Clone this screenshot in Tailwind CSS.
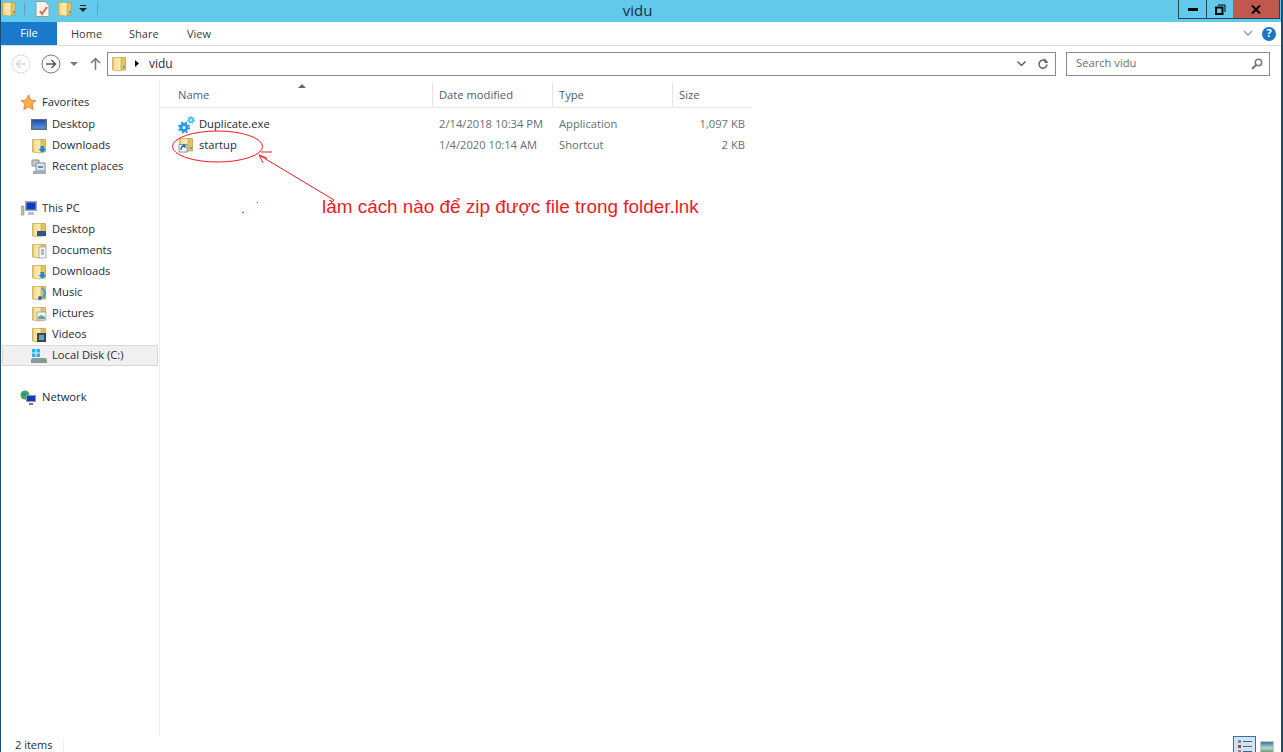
<!doctype html>
<html lang="en">
<head>
<meta charset="UTF-8" />
<title>vidu</title>
<script src="https://cdn.jsdelivr.net/npm/@tailwindcss/browser@4"></script>
</head>
<body>
<svg width="0" height="0" class="absolute">
  <defs>
    <linearGradient id="folderFront" x1="0" y1="0" x2="1" y2="0">
      <stop offset="0" stop-color="#d9b45c"/>
      <stop offset=".25" stop-color="#f6e19a"/>
      <stop offset="1" stop-color="#fbeebb"/>
    </linearGradient>
    <linearGradient id="screen" x1="0" y1="0" x2="0" y2="1">
      <stop offset="0" stop-color="#1d4fa8"/>
      <stop offset="1" stop-color="#5b93dc"/>
    </linearGradient>
    <symbol id="folder" viewBox="0 0 16 16">
      <path d="M8 1.500h6.500v12.500H8z" fill="#e3c25f" stroke="#b9993f" stroke-width=".7"/>
      <path d="M12 10h2v2h-2z" fill="#4aa3dc"/>
      <path d="M1.500 1.500h7.800l.7 1v11.800l-1 .7-7.500-1z" fill="url(#folderFront)" stroke="#c6a750" stroke-width=".7"/>
    </symbol>
  </defs>
</svg>
<div class="relative flex h-[752px] w-[1283px] flex-col overflow-hidden border-l border-r-2 border-l-[#1b4f72] border-r-[#1b4f72] bg-white font-['Open_Sans','Noto_Sans',sans-serif] text-[11.2px] text-[#1e2b3a]">

  <!-- title bar -->
  <div class="relative flex h-[22px] shrink-0 items-center justify-center bg-[#62c9ea] pb-[2px] pr-[7px] text-[15px] text-[#12323f]">
    <div class="absolute left-0 top-[1px] flex items-center">
      <svg class="h-[16px] w-[16px]"><use href="#folder"/></svg>
      <span class="ml-[7px] h-[12px] w-px bg-[#6f98a8]"></span>
      <svg class="ml-[10px] h-[16px] w-[15px]" viewBox="0 0 15 16"><path d="M1 .500h9l4 4v11H1z" fill="#f7f5f2" stroke="#9a9a9a"/><path d="M5 10l2 3 5-7" fill="none" stroke="#ea6a3c" stroke-width="2"/></svg>
      <svg class="ml-[7px] h-[16px] w-[16px]"><use href="#folder"/></svg>
      <svg class="ml-[6px] h-[8px] w-[8px]" viewBox="0 0 8 8"><path d="M1 0h6v1H1z" fill="#222"/><path d="M0 3h8L4 7z" fill="#222"/></svg>
      <span class="ml-[10px] h-[12px] w-px bg-[#6f98a8]"></span>
    </div>
    <span>vidu</span>
    <div class="absolute right-[1px] top-0 flex h-[19px] border-x border-b border-[#27444f]">
      <div class="flex w-[28px] items-center justify-center border-r border-[#27444f]"><span class="h-[3px] w-[10px] bg-black"></span></div>
      <div class="flex w-[26px] items-center justify-center">
        <svg class="h-[11px] w-[11px]" viewBox="0 0 11 11"><path d="M3 1h7v7" fill="none" stroke="#000"/><path d="M1 3.500h6.500V10H1z" fill="none" stroke="#000" stroke-width="2"/></svg>
      </div>
      <div class="flex w-[46px] items-center justify-center bg-[#c1584e]">
        <svg class="h-[9px] w-[10px]" viewBox="0 0 10 9"><path d="M1 .5l8 8M9 .5l-8 8" stroke="#000" stroke-width="2"/></svg>
      </div>
    </div>
  </div>

  <!-- ribbon tabs -->
  <div class="flex h-[24px] shrink-0 items-center border-b border-[#dadbdc] text-[11px] text-[#3b3b3b]">
    <div class="flex h-full w-[56px] items-center justify-center bg-[#1979ca] text-white">File</div>
    <div class="ml-[14px] flex h-full w-[58px] items-center pt-[1px]">Home</div>
    <div class="flex h-full w-[58px] items-center pt-[1px]">Share</div>
    <div class="flex h-full items-center pt-[1px]">View</div>
    <svg class="ml-auto mr-[9px] h-[7px] w-[10px]" viewBox="0 0 10 7"><path d="M1 1l4 4 4-4" fill="none" stroke="#9a9a9a" stroke-width="1.500"/></svg>
    <div class="mr-[5px] flex h-[14px] w-[14px] items-center justify-center rounded-full bg-[#1b75c4] text-[11px] font-bold text-white">?</div>
  </div>

  <!-- address bar -->
  <div class="flex h-[34px] shrink-0 items-center pt-[1px]">
    <svg class="ml-[10px] h-[20px] w-[20px]" viewBox="0 0 20 20"><circle cx="10" cy="10" r="9" fill="none" stroke="#dcdcdc"/><path d="M15 10H6M9.500 6L5.500 10l4 4" fill="none" stroke="#dcdcdc" stroke-width="1.500"/></svg>
    <svg class="ml-[10px] h-[20px] w-[20px]" viewBox="0 0 20 20"><circle cx="10" cy="10" r="9" fill="none" stroke="#777"/><path d="M5 10h9M10.500 6l4 4-4 4" fill="none" stroke="#555" stroke-width="1.500"/></svg>
    <svg class="ml-[9px] h-[4px] w-[8px]" viewBox="0 0 8 4"><path d="M0 0h8L4 4z" fill="#7c7c7c"/></svg>
    <svg class="ml-[12px] h-[13px] w-[11px]" viewBox="0 0 11 13"><path d="M5.500 13V2M1 6l4.500-4.500L10 6" fill="none" stroke="#777" stroke-width="1.500"/></svg>
    <div class="ml-[6px] flex h-[24px] w-[949px] items-center border border-[#8a8a8a] text-[12px]">
      <svg class="ml-[3px] h-[16px] w-[16px]"><use href="#folder"/></svg>
      <svg class="ml-[8px] h-[7px] w-[4px]" viewBox="0 0 4 7"><path d="M0 0l4 3.500L0 7z" fill="#111"/></svg>
      <span class="ml-[10px]">vidu</span>
      <svg class="ml-auto h-[5px] w-[9px]" viewBox="0 0 9 5"><path d="M.5.500l4 4 4-4" fill="none" stroke="#555" stroke-width="1.300"/></svg>
      <svg class="ml-[11px] mr-[6px] h-[12px] w-[12px]" viewBox="0 0 12 12"><path d="M10 6.500A4 4 0 1 1 8.500 3" fill="none" stroke="#666" stroke-width="1.500"/><path d="M7.500 0v5h4z" fill="#666"/></svg>
    </div>
    <div class="ml-[10px] flex h-[24px] w-[204px] items-center border border-[#8a8a8a] pl-[9px] text-[#6d6d6d]">
      <span>Search vidu</span>
      <svg class="ml-auto mr-[6px] h-[12px] w-[12px]" viewBox="0 0 12 12"><circle cx="7.500" cy="4.500" r="3.200" fill="none" stroke="#777" stroke-width="1.500"/><path d="M5 7l-4 4" stroke="#777" stroke-width="2"/></svg>
    </div>
  </div>

  <!-- main -->
  <div class="flex min-h-0 flex-1">
    <!-- nav pane -->
    <div class="flex w-[159px] shrink-0 flex-col border-r border-[#eeeeee] pt-[12px]">
      <div class="flex h-[22px] items-center pb-[1px] pl-[19px]">
        <svg class="h-[17px] w-[17px]" viewBox="0 0 17 17"><path d="M8.500 1l2.300 5 5.200.6-3.900 3.500 1.100 5.400-4.700-2.700-4.700 2.700 1.100-5.400L1 6.600 6.200 6z" fill="#fbb040" stroke="#e8844a"/></svg>
        <span class="ml-[5px]">Favorites</span>
      </div>
      <div class="flex h-[21px] items-center pl-[30px]">
        <svg class="h-[15px] w-[16px]" viewBox="0 0 16 15"><path d="M0 2h16v11H0z" fill="#5c6f82"/><path d="M1.500 3h13v8.500h-13z" fill="url(#screen)"/></svg>
        <span class="ml-[5px]">Desktop</span>
      </div>
      <div class="flex h-[21px] items-center pl-[30px]">
        <svg class="h-[16px] w-[16px]" viewBox="0 0 16 16"><use href="#folder"/><path d="M9.500 8h3.500v3h2l-3.700 4-3.800-4h2z" fill="#1f86d8"/></svg>
        <span class="ml-[5px]">Downloads</span>
      </div>
      <div class="flex h-[21px] items-center pl-[30px]">
        <svg class="h-[16px] w-[16px]" viewBox="0 0 16 16"><path d="M1 1h7v6H1z" fill="#c9cdd1" stroke="#8b9095"/><path d="M5 4h9v8H5z" fill="#dbe6ef" stroke="#7f8a94"/><path d="M7 7h5v2H7z" fill="#4a9ad4"/><path d="M2 12h13v3H2z" fill="#a9adb1"/></svg>
        <span class="ml-[5px]">Recent places</span>
      </div>

      <div class="mt-[21px] flex h-[21px] items-center pl-[20px]">
        <svg class="h-[15px] w-[16px]" viewBox="0 0 16 15"><path d="M0 5h3v9H0z" fill="#a9c7b2" stroke="#77877c" stroke-width=".5"/><path d="M4 0h12v10H4z" fill="#9ea8b2"/><path d="M5.500 1.500h9v7h-9z" fill="#1238c4"/><path d="M7 11h6v3H7z" fill="#b9bec3"/></svg>
        <span class="ml-[5px]">This PC</span>
      </div>
      <div class="flex h-[21px] items-center pl-[30px]">
        <svg class="h-[16px] w-[16px]" viewBox="0 0 16 16"><use href="#folder"/><path d="M6 9h9v5H6z" fill="#30557c"/></svg>
        <span class="ml-[5px]">Desktop</span>
      </div>
      <div class="flex h-[21px] items-center pl-[30px]">
        <svg class="h-[16px] w-[16px]" viewBox="0 0 16 16"><use href="#folder"/><path d="M8 4h7v11H8z" fill="#f4f6f8" stroke="#8893a0" stroke-width=".7"/><path d="M10 7h3M10 9h3M10 11h3" stroke="#6d7c8c"/></svg>
        <span class="ml-[5px]">Documents</span>
      </div>
      <div class="flex h-[21px] items-center pl-[30px]">
        <svg class="h-[16px] w-[16px]" viewBox="0 0 16 16"><use href="#folder"/><path d="M9.500 8h3.500v3h2l-3.700 4-3.800-4h2z" fill="#1f86d8"/></svg>
        <span class="ml-[5px]">Downloads</span>
      </div>
      <div class="flex h-[21px] items-center pl-[30px]">
        <svg class="h-[16px] w-[16px]" viewBox="0 0 16 16"><use href="#folder"/><path d="M11 3c3 2 4 7 1 10" fill="none" stroke="#3b9ae0" stroke-width="2"/><circle cx="9" cy="13" r="2" fill="#1f6fb8"/></svg>
        <span class="ml-[5px]">Music</span>
      </div>
      <div class="flex h-[21px] items-center pl-[30px]">
        <svg class="h-[16px] w-[16px]" viewBox="0 0 16 16"><use href="#folder"/><path d="M6 6h9v8H6z" fill="#eef3f5" stroke="#85929e" stroke-width=".7"/><path d="M7 11l3-2 4 2v2H7z" fill="#6aa58a"/></svg>
        <span class="ml-[5px]">Pictures</span>
      </div>
      <div class="flex h-[21px] items-center pl-[30px]">
        <svg class="h-[16px] w-[16px]" viewBox="0 0 16 16"><use href="#folder"/><path d="M6 6h9v9H6z" fill="#3a4650"/><path d="M8 8h5v5H8z" fill="#5aa7c8"/></svg>
        <span class="ml-[5px]">Videos</span>
      </div>
      <div class="ml-[1px] flex h-[21px] w-[156px] items-center border border-[#d9d9d9] bg-[#f0f0f0] pl-[28px]">
        <svg class="h-[16px] w-[16px]" viewBox="0 0 16 16"><path d="M1 1h3.500v3.500H1zM5.500 1H9v3.500H5.500zM1 5.500h3.500V9H1zM5.500 5.500H9V9H5.500z" fill="#1fb4ee"/><path d="M1 10h14l1 2v3H0v-3z" fill="#8e979d"/><path d="M9 12.500h5" stroke="#43c44c"/></svg>
        <span class="ml-[5px]">Local Disk (C:)</span>
      </div>

      <div class="mt-[21px] flex h-[21px] items-center pl-[19px]">
        <svg class="h-[16px] w-[17px]" viewBox="0 0 17 16"><circle cx="5" cy="5" r="4.500" fill="#3fa85a"/><path d="M2 3h4v3H3z" fill="#2a7fd0"/><path d="M6 5h10v7H6z" fill="#8e9aa5"/><path d="M7 6h8v5H7z" fill="#1238c4"/><path d="M9 13h4v2H9z" fill="#777"/></svg>
        <span class="ml-[5px]">Network</span>
      </div>
    </div>

    <!-- file list -->
    <div class="min-w-0 flex-1 pt-[3px]">
      <div class="relative flex h-[25px] w-[592px] items-center border-b border-[#e3e3e3] text-[#4c607a]">
        <svg class="absolute left-[138px] top-[1px] h-[4px] w-[8px]" viewBox="0 0 8 4"><path d="M4 0l4 4H0z" fill="#5a6b7d"/></svg>
        <div class="flex h-full w-[273px] items-center border-r border-[#e3e3e3] pl-[18px]">Name</div>
        <div class="flex h-full w-[120px] items-center border-r border-[#e3e3e3] pl-[6px]">Date modified</div>
        <div class="flex h-full w-[120px] items-center border-r border-[#e3e3e3] pl-[6px]">Type</div>
        <div class="flex h-full w-[79px] items-center pl-[6px]">Size</div>
      </div>
      <div class="mt-[6px] w-[592px]">
        <div class="flex h-[21px] items-center text-[#666e78]">
          <div class="flex w-[273px] items-center pl-[18px] text-[#1e2b3a]">
            <svg class="h-[18px] w-[17px]" viewBox="0 0 17 18"><circle cx="6" cy="11.500" r="3" fill="none" stroke="#2d9be8" stroke-width="3"/><circle cx="6" cy="11.500" r="5" fill="none" stroke="#2d9be8" stroke-width="2" stroke-dasharray="2 2"/><circle cx="13" cy="4" r="2" fill="none" stroke="#55c0f0" stroke-width="2"/><circle cx="13" cy="4" r="3.400" fill="none" stroke="#55c0f0" stroke-width="1.200" stroke-dasharray="1.500 1.500"/></svg>
            <span class="ml-[4px]">Duplicate.exe</span>
          </div>
          <div class="w-[120px] pl-[6px]">2/14/2018 10:34 PM</div>
          <div class="w-[120px] pl-[6px]">Application</div>
          <div class="w-[72px] text-right">1,097 KB</div>
        </div>
        <div class="flex h-[21px] items-center text-[#666e78]">
          <div class="flex w-[273px] items-center pl-[18px] text-[#1e2b3a]">
            <svg class="h-[16px] w-[16px]" viewBox="0 0 16 16"><use href="#folder"/><path d="M1 7.500h8V15H1z" fill="#fff" stroke="#6f7a85" stroke-width=".8"/><path d="M3 13c0-3 1-4 3-4M4.500 8.500H7V11" fill="none" stroke="#1b5aa8" stroke-width="1.300"/></svg>
            <span class="ml-[5px]">startup</span>
          </div>
          <div class="w-[120px] pl-[6px]">1/4/2020 10:14 AM</div>
          <div class="w-[120px] pl-[6px]">Shortcut</div>
          <div class="w-[72px] text-right">2 KB</div>
        </div>
      </div>
    </div>
  </div>

  <!-- status bar -->
  <div class="relative flex h-[16px] shrink-0 items-start pl-[14px] pt-[3px]">
    <span class="text-[11px] leading-[12px]">2 items</span>
    <span class="absolute left-[62px] top-[3px] h-[13px] w-px bg-[#eeeeee]"></span>
    <div class="absolute right-[25px] top-0 flex h-[20px] w-[23px] flex-col gap-[2px] border border-[#3a6ea5] bg-[#cfe3f6] pl-[4px] pt-[3px]">
      <span class="flex items-center gap-[2px]"><span class="h-[3px] w-[3px] bg-[#8a8a8a]"></span><span class="h-px w-[9px] bg-[#55606b]"></span></span>
      <span class="flex items-center gap-[2px]"><span class="h-[3px] w-[3px] bg-[#c0392b]"></span><span class="h-px w-[9px] bg-[#55606b]"></span></span>
      <span class="flex items-center gap-[2px]"><span class="h-[3px] w-[3px] bg-[#8a8a8a]"></span><span class="h-px w-[9px] bg-[#55606b]"></span></span>
    </div>
    <div class="absolute right-[7px] top-[5px] h-[14px] w-[14px] border border-[#c8c8c8] bg-[linear-gradient(#2b78a8,#bcd8c8,#3d7f5a)]"></div>
  </div>

  <!-- red annotation drawn over the window -->
  <svg class="pointer-events-none absolute left-0 top-0" width="1283" height="752" viewBox="0 0 1283 752" fill="none" stroke="#ed1c24">
    <ellipse cx="216.500" cy="146.500" rx="45" ry="15.500"/>
    <path d="M260 152h11M258 155l75 45M258 155l4 8M258 155l8 3M333 200l-3 3M256 203l1-1M241 213l2-1"/>
  </svg>
  <span class="absolute left-[321px] top-[196px] font-['Liberation_Sans',sans-serif] text-[18.9px] leading-[22px] text-[#ed1c24]">làm cách nào để zip được file trong folder.lnk</span>
</div>
</body>
</html>
